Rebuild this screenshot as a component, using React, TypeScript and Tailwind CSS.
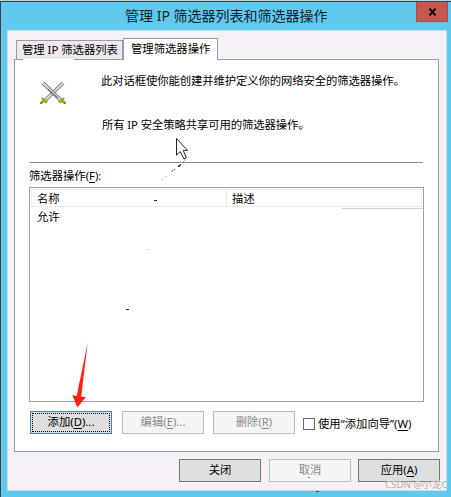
import React from 'react';

type DialogButtonProps = {
  label: string;
  hotkey?: string;
  suffix?: string;
  className: string;
  focused?: boolean;
};

const Hotkey: React.FC<{ letter: string }> = ({ letter }) => (
  <>
    (<span className="underline decoration-1 underline-offset-[1.5px]">{letter}</span>)
  </>
);

const DialogButton: React.FC<DialogButtonProps> = ({ label, hotkey, suffix, className, focused }) => (
  <button className={`relative flex h-[23px] shrink-0 items-center justify-center border whitespace-nowrap ${className}`}>
    {focused && <span className="absolute inset-[1px] border border-dotted border-black" />}
    <span>
      {label}
      {hotkey && <Hotkey letter={hotkey} />}
      {suffix}
    </span>
  </button>
);

const SwordsIcon: React.FC = () => (
  <svg className="h-[24px] w-[28px]" viewBox="0 0 28 24" fill="none">
    <path d="M24 2L6.5 19" stroke="#777" strokeWidth="3.8" />
    <path d="M24 2L6.5 19" stroke="#d6d6d6" strokeWidth="2.1" />
    <path d="M4 2L21.5 19" stroke="#666" strokeWidth="3.8" />
    <path d="M4 2L21.5 19" stroke="#dedede" strokeWidth="2.1" />
    <path d="M9 8L19 17" stroke="#333" strokeWidth="0.8" />
    <path d="M2.5 16.5L5 17L9 20.5L7 22.5L5 21.5L1.5 23.5L1 21L3 19.5Z" fill="#aaa51c" />
    <path d="M25.5 16.5L23 17L19 20.5L21 22.5L23 21.5L26.5 23.5L27 21L25 19.5Z" fill="#aaa51c" />
    <path d="M1.5 23L3.5 21M26.5 23L24.5 21" stroke="#55520b" strokeWidth="1" />
  </svg>
);

const Cursor: React.FC = () => (
  <svg className="absolute top-[136px] left-[160px] h-[46px] w-[32px]" viewBox="0 0 32 46" fill="none">
    <path d="M16.5 1.5V18.2L20.2 14.6L24 22L26.4 20.8L23.2 13.4H27.5Z" fill="#fff" stroke="#222" strokeWidth="1" />
    <path d="M23 25L26 22" stroke="#bbb" strokeWidth="1" />
    <path d="M18 29.8L21 27.5" stroke="#111" strokeWidth="1.3" />
    <path d="M11.5 34.8L15 32" stroke="#333" strokeWidth="1" strokeDasharray="2 1" />
    <path d="M1 43.5L8 38.5" stroke="#bbb" strokeWidth="0.8" strokeDasharray="3 1.5" />
  </svg>
);

const RedArrow: React.FC = () => (
  <svg className="absolute top-[341px] left-[71px] h-[66px] w-[18px]" viewBox="0 0 18 66">
    <path d="M16.7 0.5L10.2 54.5L14.7 55.2L6.3 65.5L1.3 53L5.6 54.2Z" fill="#ff2112" />
  </svg>
);

const TitleBar: React.FC = () => (
  <header className="flex h-[28px] justify-end">
    <h1 className="flex-1 pt-[3px] pl-[124px] text-[14px] leading-[21px] whitespace-nowrap text-[#17252b]">
      管理 IP 筛选器列表和筛选器操作
    </h1>
    <button className="mr-[3px] flex h-[20px] w-[32px] items-center justify-center border border-t-0 border-[#9c5054] bg-[#c75750]">
      <svg className="h-[8px] w-[9px]" viewBox="0 0 9 8">
        <path d="M1.5 0.5L7.5 7.5M7.5 0.5L1.5 7.5" stroke="#111" strokeWidth="2.1" />
      </svg>
    </button>
  </header>
);

const ActionList: React.FC = () => (
  <div className="ml-[14px] h-[215px] w-[395px] border border-[#a0a0a8] bg-white pt-px">
    <div className="mx-px flex h-[18px] border border-[#ececec] leading-[17px]">
      <div className="w-[195px] border-r border-[#e5e5e5] pl-[5px]">名称</div>
      <div className="pl-[5px]">描述</div>
    </div>
    <div className="ml-auto flex h-[2px] w-[81px] items-end">
      <span className="h-px w-full bg-[#cfcfcf]" />
    </div>
    <div className="pl-[7px] leading-[15px]">允许</div>
  </div>
);

export default function App() {
  return (
    <div className="relative h-[497px] w-[451px] overflow-hidden border-t border-[#b7d4df] bg-[#60c9ed] font-['Noto_Sans','Noto_Sans_CJK_SC',sans-serif] text-[11.33px] text-black">
      <div className="h-[496px] border-t border-l border-[#3b444b]">
        <TitleBar />
        <main className="ml-[6px] h-[461px] w-[440px] border border-[#cbd9e4] bg-[#f5f0f5] pt-[7px] pl-[6px]">
          <div className="flex h-[21px] items-end pl-[2px]">
            <div className="h-[19px] w-[107px] border border-b-0 border-[#9b9ba3] bg-[#eee9ee] pl-[5px] leading-[18px] whitespace-nowrap">
              管理 IP 筛选器列表
            </div>
            <div className="relative z-10 -mb-px h-[22px] w-[95px] border border-b-0 border-[#9b9ba3] bg-white pl-[7px] leading-[19px] whitespace-nowrap">
              管理筛选器操作
            </div>
          </div>
          <section className="relative h-[393px] w-[425px] border border-[#9b9ba3] bg-white">
            <span className="absolute -top-px left-[8px] h-px w-[51px] bg-white" />
            <div className="flex h-[102px] pl-[24px]">
              <div className="pt-[21px]">
                <SwordsIcon />
              </div>
              <div className="pt-[12px] pl-[34px] tracking-[-0.08px] whitespace-nowrap">
                <p className="leading-[18px]">此对话框使你能创建并维护定义你的网络安全的筛选器操作。</p>
                <p className="mt-[26px] pl-px leading-[18px]">所有 IP 安全策略共享可用的筛选器操作。</p>
              </div>
            </div>
            <hr className="ml-[14px] w-[394px] border-[#929292]" />
            <p className="h-[24px] pt-[4px] pl-[14px] leading-[18px]">
              筛选器操作<Hotkey letter="F" />:
            </p>
            <ActionList />
            <div className="mt-[9px] ml-[15px] flex">
              <DialogButton label="添加" hotkey="D" suffix="..." focused className="w-[82px] border-[#4385b8] bg-[#dedede]" />
              <DialogButton label="编辑" hotkey="E" suffix="..." className="ml-[10px] w-[82px] border-[#b9bdbd] bg-[#f5f5f5] text-[#888]" />
              <DialogButton label="删除" hotkey="R" className="ml-[9px] w-[82px] border-[#b9bdbd] bg-[#f5f5f5] text-[#888]" />
              <label className="ml-[8px] flex items-center pt-[3px] whitespace-nowrap">
                <span className="mr-[3px] h-[12px] w-[12px] border border-[#666] bg-white" />
                <span>
                  使用“添加向导”<Hotkey letter="W" />
                </span>
              </label>
            </div>
          </section>
          <footer className="mt-[7px] flex pl-[165px]">
            <DialogButton label="关闭" className="w-[82px] border-[#777] bg-[#dedede]" />
            <DialogButton label="取消" className="ml-[8px] w-[82px] border-[#b9c1c2] bg-[#f5f5f5] text-[#888]" />
            <DialogButton label="应用" hotkey="A" className="ml-[7px] w-[82px] border-[#777] bg-[#dedede]" />
          </footer>
        </main>
      </div>
      <Cursor />
      <RedArrow />
      {/* stray specks */}
      <span className="absolute top-[199px] left-[154px] h-px w-[3px] bg-[#222]" />
      <span className="absolute top-[248px] left-[147px] h-px w-[2px] bg-[#ccc]" />
      <span className="absolute top-[308px] left-[126px] h-px w-[3px] bg-[#222]" />
      <span className="absolute top-[476px] left-[308px] h-px w-[2px] bg-[#777]" />
      <span className="absolute top-[490px] left-[316px] h-px w-[3px] bg-[#245]" />
      <span className="absolute top-[477px] left-[385px] text-[9.7px] leading-[14px] whitespace-nowrap text-[#aaa] [text-shadow:0_0_1px_#fff]">CSDN @小龙C</span>
    </div>
  );
}
